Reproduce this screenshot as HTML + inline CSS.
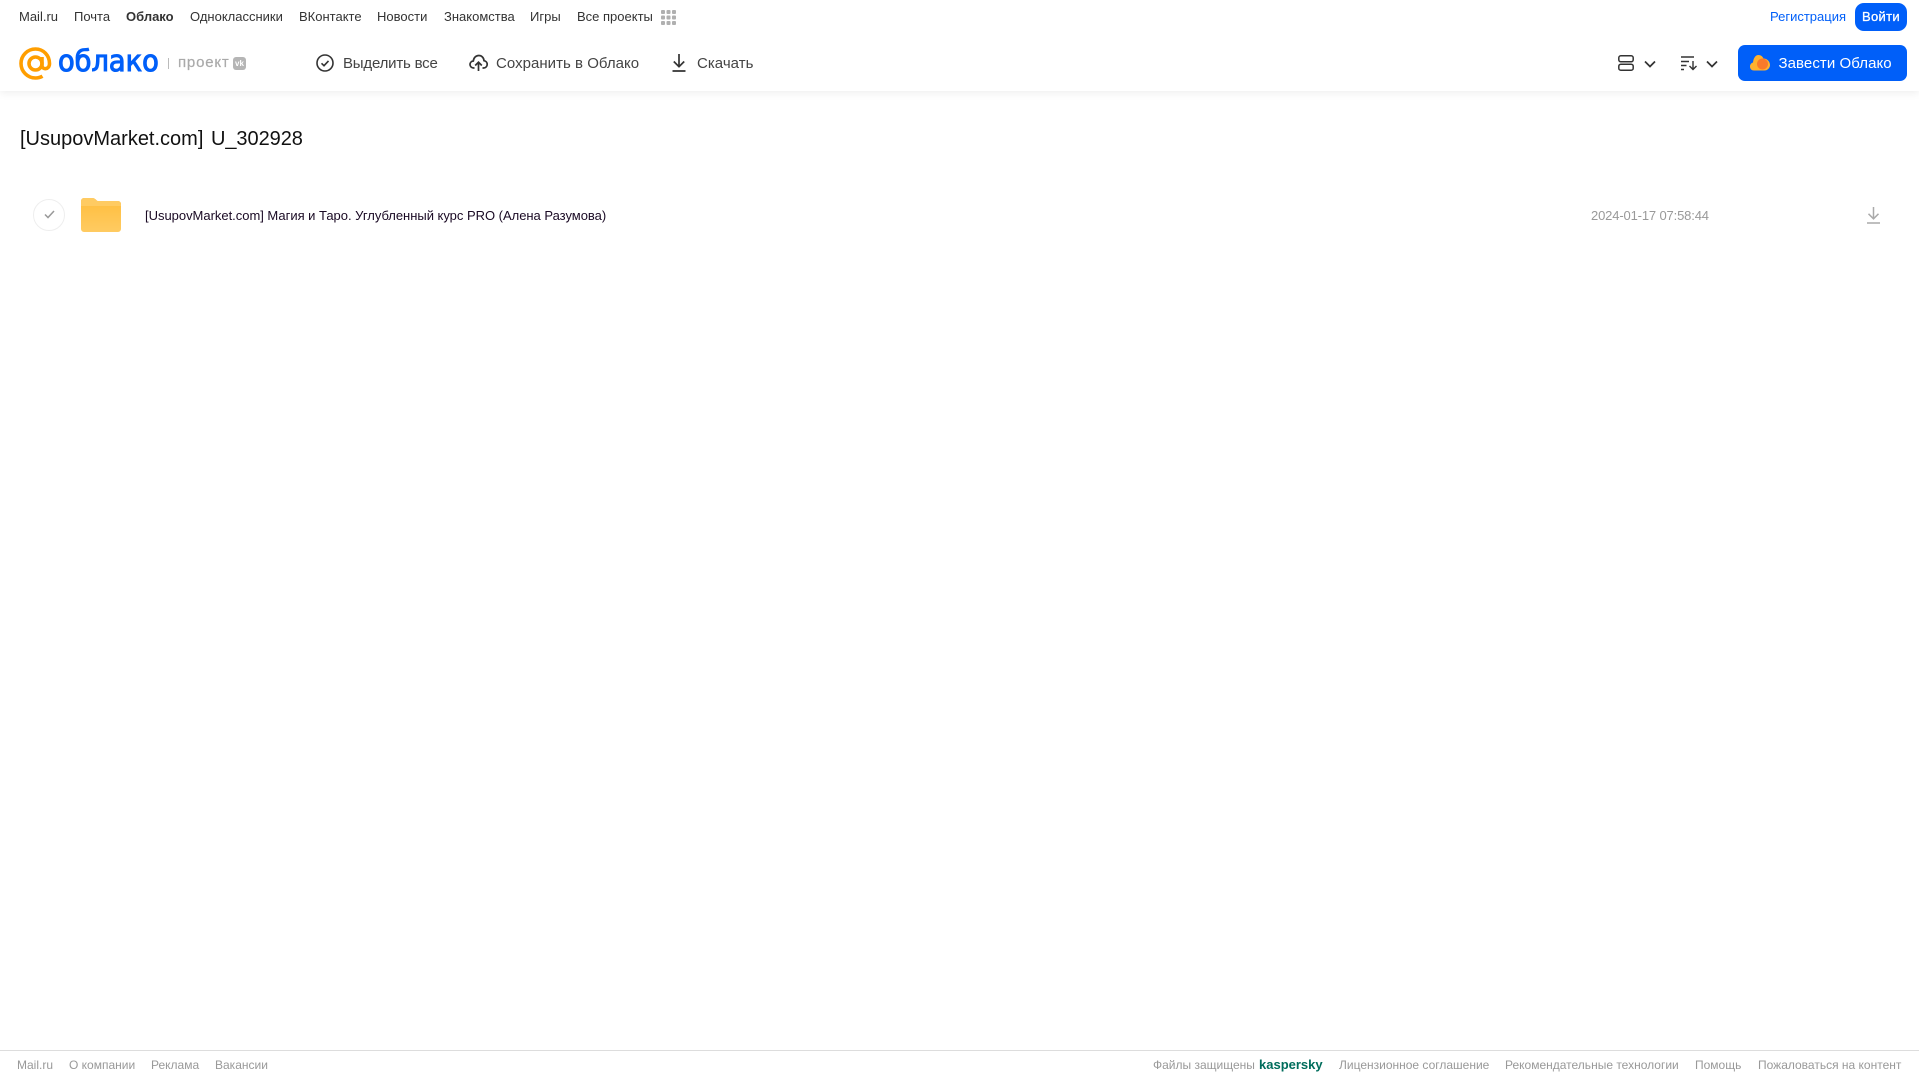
<!DOCTYPE html>
<html lang="ru"><head><meta charset="utf-8"><title>Облако</title>
<style>
html,body{margin:0;padding:0;background:#fff}
body{width:1919px;height:1079px;position:relative;overflow:hidden;font-family:"Liberation Sans",sans-serif}
.t{position:absolute;white-space:nowrap;line-height:20px}
.n{font-size:13px;color:#333;top:7px}
.a{font-size:15px;color:#444;top:54px}
.f{font-size:12px;color:#999;top:1055px}
svg{position:absolute;overflow:visible}
</style></head><body>
<div style="position:absolute;left:0;top:0;width:1919px;height:91px;background:#fff;box-shadow:0 2px 8px rgba(0,0,0,.07)"></div>

<span class="t n" style="left:19px">Mail.ru</span>
<span class="t n" style="left:74px">Почта</span>
<span class="t n" style="left:126px;font-weight:bold">Облако</span>
<span class="t n" style="left:190px">Одноклассники</span>
<span class="t n" style="left:299px">ВКонтакте</span>
<span class="t n" style="left:377px">Новости</span>
<span class="t n" style="left:444px">Знакомства</span>
<span class="t n" style="left:530px">Игры</span>
<span class="t n" style="left:577px">Все проекты</span>
<svg style="left:661px;top:10px" width="15" height="15" fill="#b0b0b0"><rect x="0" y="0" width="4" height="4" rx="1"/><rect x="5.500" y="0" width="4" height="4" rx="1"/><rect x="11" y="0" width="4" height="4" rx="1"/><rect x="0" y="5.500" width="4" height="4" rx="1"/><rect x="5.500" y="5.500" width="4" height="4" rx="1"/><rect x="11" y="5.500" width="4" height="4" rx="1"/><rect x="0" y="11" width="4" height="4" rx="1"/><rect x="5.500" y="11" width="4" height="4" rx="1"/><rect x="11" y="11" width="4" height="4" rx="1"/></svg>

<svg style="left:19px;top:47px" width="33" height="33" viewBox="0 0 33 33" fill="none" stroke="#ff9e00" stroke-width="3.600"><circle cx="16.500" cy="16.500" r="6.500"/><path d="M23 10v8.500c0 4.500 7.500 4.500 7.500-2 0-8-6-14.500-14-14.500S2 8.500 2 16.500 8.500 31 16.500 31c2.800 0 5-.6 7-1.800"/></svg>
<span class="t" style="left:57.500px;top:45px;font-size:29px;line-height:32px;color:#005ff9;font-family:'DejaVu Sans',sans-serif;-webkit-text-stroke:1.100px #005ff9;transform-origin:0 50%;transform:scaleX(.94)">облако</span>
<div style="position:absolute;left:168px;top:58px;width:1px;height:11px;background:#bbb"></div>
<span class="t" style="left:178px;top:53px;font-size:15px;color:#aaa;letter-spacing:.8px;-webkit-text-stroke:.2px #aaa">проект</span>
<div style="position:absolute;left:233px;top:57px;width:13px;height:13px;border-radius:3px;background:#b5b5b5;color:#fff;font:bold 8px/13px 'Liberation Sans',sans-serif;text-align:center">vk</div>

<svg style="left:316px;top:54px" width="18" height="18" viewBox="0 0 18 18" fill="none" stroke="#333" stroke-width="1.600"><circle cx="9" cy="9" r="8"/><path d="M5.500 9.300l2.500 2.400 4.500-4.800"/></svg>
<span class="t a" style="left:343px;letter-spacing:-.2px">Выделить все</span>
<svg style="left:469px;top:54px" width="19" height="18" viewBox="0 0 19 18" fill="none" stroke="#333" stroke-width="1.700"><path d="M5.500 14H4.800C2.600 14 1 12.500 1 10.500S2.500 7.200 4.300 7C4.700 3.700 6.900 1.500 9.800 1.500s5 2.200 5.200 5.200c1.900.3 3.200 1.800 3.200 3.700 0 2-1.500 3.600-3.700 3.600h-1"/><path d="M9.500 17V8.500M6.200 11.500l3.300-3.300 3.300 3.300"/></svg>
<span class="t a" style="left:496px;letter-spacing:.03px">Сохранить в Облако</span>
<svg style="left:671px;top:54px" width="16" height="18" viewBox="0 0 16 18" fill="none" stroke="#333" stroke-width="1.700"><path d="M8 0v12.500M2.800 7.500L8 12.700l5.200-5.200M1.500 17h13"/></svg>
<span class="t a" style="left:697px;letter-spacing:.03px">Скачать</span>

<svg style="left:1618px;top:55px" width="16" height="16" viewBox="0 0 16 16" fill="none" stroke="#333" stroke-width="1.500"><rect x=".8" y=".8" width="14.400" height="6" rx="2"/><rect x=".8" y="9.200" width="14.400" height="6" rx="2"/></svg>
<svg style="left:1644px;top:59.500px" width="12" height="8" viewBox="0 0 12 8" fill="none" stroke="#333" stroke-width="1.700"><path d="M1 1.500l5 5 5-5"/></svg>
<svg style="left:1681px;top:55.500px" width="16" height="14" viewBox="0 0 16 14" fill="none" stroke="#333" stroke-width="1.400"><path d="M0 1h13M0 5.500h8M0 9.500h5.500M0 13.500h3M12 5v8.500M8.500 10l3.500 3.500 3.500-3.500"/></svg>
<svg style="left:1706px;top:59.500px" width="12" height="8" viewBox="0 0 12 8" fill="none" stroke="#333" stroke-width="1.700"><path d="M1 1.500l5 5 5-5"/></svg>

<span class="t" style="left:1770px;top:7px;font-size:13px;color:#005ff9">Регистрация</span>
<div style="position:absolute;left:1855px;top:3px;width:52px;height:28px;border-radius:9px;background:#005ff9;color:#fff;font-size:13px;letter-spacing:.3px;-webkit-text-stroke:.3px #fff;line-height:27px;text-align:center">Войти</div>
<div style="position:absolute;left:1738px;top:45px;width:169px;height:36px;border-radius:7px;background:#005ff9"></div>
<svg style="left:1750px;top:54px" width="20" height="17" viewBox="0 0 20 17"><path d="M4 16.500C1.500 16.500 0 14.800 0 12.500c0-2 1.200-3.500 3-4C3.500 4 5.500 1 8.500 1c2.500 0 4 1.500 5 3.500 3.500 0 6.500 3 6.500 6.500 0 3-2.500 5.500-5.500 5.500z" fill="#ffb12e"/><circle cx="12.500" cy="10" r="5.500" fill="#f97a2a"/></svg>
<span class="t" style="left:1778.500px;top:54px;font-size:15px;color:#fff;letter-spacing:.07px">Завести Облако</span>

<span class="t" style="left:20px;top:127px;font-size:20px;line-height:24px;color:#111">[UsupovMarket.com] <span style="margin-left:2px;letter-spacing:-.05px">U_302928</span></span>

<div style="position:absolute;left:33px;top:199px;width:30px;height:30px;border:1px solid #eee;border-radius:50%"></div>
<svg style="left:44px;top:210px" width="11" height="9" viewBox="0 0 11 9" fill="none" stroke="#999" stroke-width="1.500"><path d="M1 4.500l3 3 6-6.500"/></svg>
<svg style="left:81px;top:198px" width="40" height="34" viewBox="0 0 40 34"><defs><linearGradient id="g" x1="0" y1="0" x2="0" y2="1"><stop offset="0" stop-color="#ffbd3c"/><stop offset="1" stop-color="#ffcb62"/></linearGradient></defs><path d="M3 0h8c2 0 3.500 1 4.500 2.300L16.500 3H37a3 3 0 0 1 3 3v25a3 3 0 0 1-3 3H3a3 3 0 0 1-3-3V3a3 3 0 0 1 3-3z" fill="url(#g)"/><path d="M0 8h40V6a3 3 0 0 0-3-3H16.500l-1-.7C14.500 1 13 0 11 0H3a3 3 0 0 0-3 3z" fill="#ffcb62"/></svg>
<span class="t" style="left:145px;top:206px;font-size:13px;letter-spacing:-.02px;color:#1a0a24">[UsupovMarket.com] Магия и Таро. Углубленный курс PRO (Алена Разумова)</span>
<span class="t" style="left:1591px;top:206px;font-size:13px;letter-spacing:-.15px;color:#999">2024-01-17 07:58:44</span>
<svg style="left:1867px;top:207px" width="13" height="17" viewBox="0 0 13 17" fill="none" stroke="#aaa" stroke-width="1.500"><path d="M6.500 0v11.500M1.500 6.800l5 5 5-5M0 16h13"/></svg>

<div style="position:absolute;left:0;top:1050px;width:1919px;height:1px;background:#ddd"></div>
<span class="t f" style="left:17px">Mail.ru</span>
<span class="t f" style="left:69px">О компании</span>
<span class="t f" style="left:151px">Реклама</span>
<span class="t f" style="left:215px">Вакансии</span>
<span class="t f" style="left:1153px">Файлы защищены</span>
<span class="t f" style="left:1259px;color:#006d5c;font-weight:bold;font-size:13px">kaspersky</span>
<span class="t f" style="left:1339px">Лицензионное соглашение</span>
<span class="t f" style="left:1505px">Рекомендательные технологии</span>
<span class="t f" style="left:1695px">Помощь</span>
<span class="t f" style="left:1758px">Пожаловаться на контент</span>
</body></html>
